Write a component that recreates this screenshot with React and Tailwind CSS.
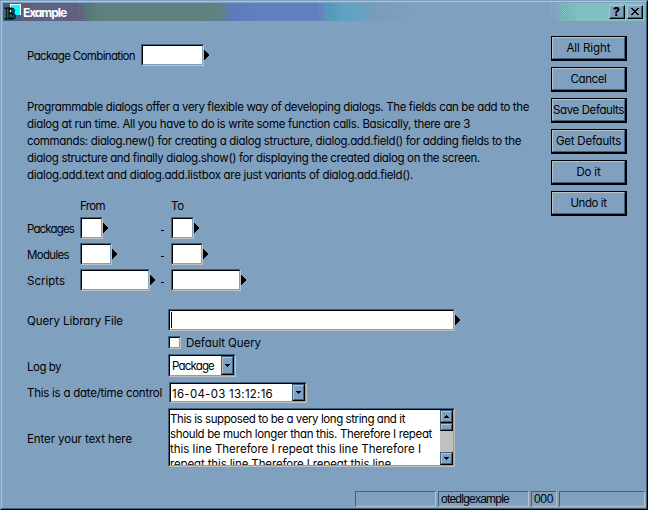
import { useLayoutEffect, useRef } from "react";

// Text set on one line and tracked so that it fills exactly `w` pixels.
function T({ w, children, className = "translate-y-px" }) {
  const ref = useRef(null);
  useLayoutEffect(() => {
    const el = ref.current;
    el.style.letterSpacing = "0px";
    const natural = el.getBoundingClientRect().width;
    el.style.letterSpacing = (w - natural) / children.length + "px";
  }, [w, children]);
  return (
    <span ref={ref} className={"block w-max shrink-0 whitespace-pre " + className}>
      {children}
    </span>
  );
}

const BAYER = [
  [0, 8, 2, 10],
  [12, 4, 14, 6],
  [3, 11, 1, 9],
  [15, 7, 13, 5],
];

// Ordered dither from left to right, as one path of single pixels.
function ditherPath(from, to) {
  let d = "";
  for (let x = from; x < to; x++) {
    const level = ((x - from + 0.5) / (to - from)) * 16;
    for (let y = 0; y < 18; y++) {
      if (BAYER[y % 4][x % 4] < level) d += `M${x} ${y}h1v1h-1z`;
    }
  }
  return d;
}

const STOPS = [
  { from: 10, to: 30, color: "#606080" },
  { from: 73, to: 98, color: "#608080" },
  { from: 200, to: 266, color: "#6080c0" },
  { from: 313, to: 340, color: "#60a0c0" },
  { from: 338, to: 415, color: "#80a0c0" },
  { from: 548, to: 577, color: "#80c0c0" },
];

function TitleGradient() {
  return (
    <svg width="642" height="18" className="absolute inset-0" shapeRendering="crispEdges">
      <rect width="642" height="18" fill="#406080" />
      {STOPS.map((s) => (
        <g key={s.from} fill={s.color}>
          <path d={ditherPath(s.from, s.to)} />
          <rect x={s.to} width={642 - s.to} height="18" />
        </g>
      ))}
    </svg>
  );
}

function Logo() {
  return (
    <svg width="18" height="18" className="relative shrink-0 overflow-visible">
      <rect width="18" height="18" fill="#406080" />
      <rect x="7" y="1" width="11" height="11" fill="#fff" />
      <rect x="8" y="2" width="9" height="10" fill="#00ffff" />
      <text x="2" y="15.5" fontFamily="Liberation Serif, serif" fontSize="16" fontWeight="700" letterSpacing="0" fill="#008080" stroke="#000" strokeWidth="1">
        B
      </text>
    </svg>
  );
}

function CaptionButton({ children }) {
  return (
    <div className="h-[14px] w-4 border border-t-[#c0c0c0] border-l-[#c0c0c0] border-r-black border-b-black bg-[#80a0c0]">
      <div className="flex h-3 w-[14px] items-center justify-center border-r border-b border-[#406080]">{children}</div>
    </div>
  );
}

function Field({ className = "", children }) {
  return (
    <div className={"shrink-0 border border-t-[#406080] border-l-[#406080] border-r-[#c0c0c0] border-b-[#c0c0c0] " + className}>
      <div className="flex h-full w-full overflow-hidden border border-t-black border-l-black border-r-[#80a0c0] border-b-[#80a0c0] bg-white">
        {children}
      </div>
    </div>
  );
}

function Arrow() {
  return (
    <svg width="5" height="10" className="mt-[6px] shrink-0" shapeRendering="crispEdges">
      <path d="M0 0h1v1h1v1h1v1h1v1h1v2h-1v1h-1v1h-1v1h-1v1h-1z" />
    </svg>
  );
}

function SmallButton({ className = "", up = false, glyph = true }) {
  return (
    <div className={"shrink-0 border border-t-[#406080] border-l-[#406080] border-r-black border-b-black bg-[#80a0c0] " + className}>
      <div className="flex h-full w-full items-center justify-center border border-t-[#c0c0c0] border-l-[#c0c0c0] border-r-[#406080] border-b-[#406080]">
        {glyph && (
          <svg width="5" height="3" shapeRendering="crispEdges">
            <path d={up ? "M2 0h1v1h1v1h1v1h-5v-1h1v-1h1z" : "M0 0h5v1h-1v1h-1v1h-1v-1h-1v-1h-1z"} />
          </svg>
        )}
      </div>
    </div>
  );
}

function PushButton({ label, w }) {
  return (
    <div className="h-[25px] w-[76px] border-t border-l border-r-2 border-b-2 border-black">
      <div className="flex h-full w-full justify-center border border-t-[#c0c0c0] border-l-[#c0c0c0] border-r-[#406080] border-b-[#406080] pt-[1px]">
        <T w={w}>{label}</T>
      </div>
    </div>
  );
}

const PARAGRAPH = [
  ["Programmable dialogs offer a very flexible way of developing dialogs. The fields can be add to the", 502],
  ["dialog at run time. All you have to do is write some function calls. Basically, there are 3", 443],
  ["commands: dialog.new() for creating a dialog structure, dialog.add.field() for adding fields to the", 494],
  ["dialog structure and finally dialog.show() for displaying the created dialog on the screen.", 453],
  ["dialog.add.text and dialog.add.listbox are just variants of dialog.add.field().", 386],
];

const LONG_TEXT = [
  ["This is supposed to be a very long string and it", 235],
  ["should be much longer than this. Therefore I repeat", 262],
  ["this line Therefore I repeat this line Therefore I", 251],
  ["repeat this line Therefore I repeat this line", 221],
];

function RangeRow({ label, w, size }) {
  return (
    <div className="flex h-[22px]">
      <div className="w-[53px] pt-[3px]"><T w={w}>{label}</T></div>
      <div className="flex w-20">
        <Field className={size} />
        <Arrow />
      </div>
      <div className="w-[11px] pt-[13px]"><div className="ml-[1px] h-px w-[3px] bg-black" /></div>
      <Field className={size} />
      <Arrow />
    </div>
  );
}

function StatusCell({ className = "", children }) {
  return (
    <div className={"h-4 border border-t-[#406080] border-l-[#406080] border-r-[#c0c0c0] border-b-[#c0c0c0] pl-[2px] font-['Liberation_Sans',sans-serif] text-[12px] leading-[14px] " + className}>
      {children}
    </div>
  );
}

export default function App() {
  return (
    <div className="h-[510px] w-[648px] overflow-hidden border border-t-[#80a0c0] border-l-[#80a0c0] border-r-black border-b-black bg-[#80a0c0] font-[Inter,sans-serif] text-[11.5px] leading-[17px] text-black [font-feature-settings:'cv11']">
      <div className="flex h-[508px] w-[646px] flex-col border border-t-[#c0c0c0] border-l-[#c0c0c0] border-r-[#406080] border-b-[#406080] pt-px pl-px">
        <header className="relative flex h-[18px] w-[642px] shrink-0">
          <TitleGradient />
          <Logo />
          <div className="relative ml-[2px] grow text-[12px] font-bold text-white"><T w={43} className="mt-[1px]">Example</T></div>
          <div className="relative mt-[2px] mr-[2px] flex gap-[2px]">
            <CaptionButton>
              <span className="text-[12px] leading-3 font-extrabold">?</span>
            </CaptionButton>
            <CaptionButton>
              <svg width="8" height="7" shapeRendering="crispEdges">
                <path d="M0 0h2v1h1v1h2v-1h1v-1h2v1h-1v1h-1v1h-1v1h1v1h1v1h1v1h-2v-1h-1v-1h-2v1h-1v1h-2v-1h1v-1h1v-1h1v-1h-1v-1h-1v-1h-1z" />
              </svg>
            </CaptionButton>
          </div>
        </header>

        <div className="flex h-[446px] shrink-0">
          <main className="w-[548px] pl-6">
            <div className="mt-[23px] flex h-[22px]">
              <div className="w-[114px] pt-[3px]"><T w={108}>Package Combination</T></div>
              <Field className="w-[63px]" />
              <Arrow />
            </div>

            <div className="mt-8">
              {PARAGRAPH.map(([line, w]) => <T key={line} w={w}>{line}</T>)}
            </div>

            <div className="mt-[14px] flex pl-[53px]">
              <div className="w-[91px]"><T w={25}>From</T></div>
              <T w={13}>To</T>
            </div>
            <div className="mt-[3px] flex flex-col gap-1">
              <RangeRow label="Packages" w={47} size="w-[23px]" />
              <RangeRow label="Modules" w={42} size="w-8" />
              <RangeRow label="Scripts" w={38} size="w-[70px]" />
            </div>

            <div className="mt-[18px] flex h-[22px]">
              <div className="w-[141px] pt-[3px]"><T w={96}>Query Library File</T></div>
              <Field className="w-[287px]"><div className="mt-px ml-px h-4 w-px bg-black" /></Field>
              <Arrow />
            </div>
            <div className="mt-[3px] flex h-[17px] pl-[141px]">
              <Field className="mt-[2px] h-[13px] w-[13px]" />
              <T w={75} className="ml-[5px] translate-y-px">Default Query</T>
            </div>
            <div className="mt-[3px] flex h-[23px]">
              <div className="w-[141px] pt-1"><T w={34}>Log by</T></div>
              <Field className="w-[68px]">
                <div className="w-[51px] pt-[1px] pl-[2px]"><T w={42}>Package</T></div>
                <SmallButton className="h-[19px] w-[13px]" />
              </Field>
            </div>
            <div className="mt-[5px] flex h-[21px]">
              <div className="w-[142px] pt-[2px]"><T w={135}>This is a date/time control</T></div>
              <Field className="w-[138px]">
                <div className="w-[121px] pt-[1px] pl-[1px]"><T w={101}>16-04-03 13:12:16</T></div>
                <SmallButton className="h-[17px] w-[13px]" />
              </Field>
            </div>
            <div className="mt-[5px] flex h-[59px]">
              <div className="w-[141px] pt-[22px]"><T w={105}>Enter your text here</T></div>
              <Field className="w-[287px]">
                <div className="w-[270px] shrink-0 pt-px leading-[15px]">
                  {LONG_TEXT.map(([line, w]) => <T key={line} w={w}>{line}</T>)}
                </div>
                <div className="flex h-[55px] w-[13px] shrink-0 flex-col bg-[#c0c0c0]">
                  <SmallButton up className="h-[13px]" />
                  <SmallButton glyph={false} className="h-2" />
                  <SmallButton className="mt-auto h-[13px]" />
                </div>
              </Field>
            </div>
          </main>

          <aside className="mt-[15px] flex flex-col gap-[6px]">
            <PushButton label="All Right" w={44} />
            <PushButton label="Cancel" w={36} />
            <PushButton label="Save Defaults" w={71} />
            <PushButton label="Get Defaults" w={65} />
            <PushButton label="Do it" w={24} />
            <PushButton label="Undo it" w={36} />
          </aside>
        </div>

        <footer className="mt-6 ml-[352px] flex shrink-0 gap-[2px]">
          <StatusCell className="w-[81px]" />
          <StatusCell className="w-[91px]"><T w={68} className="">otedlgexample</T></StatusCell>
          <StatusCell className="w-[26px]"><T w={19} className="">000</T></StatusCell>
          <StatusCell className="w-[86px]" />
        </footer>
      </div>
    </div>
  );
}
